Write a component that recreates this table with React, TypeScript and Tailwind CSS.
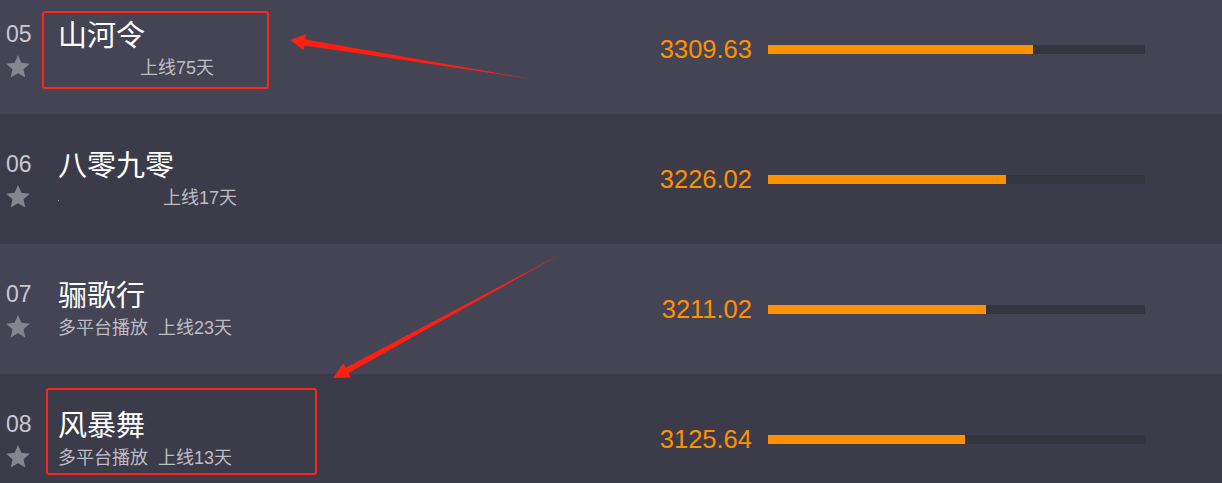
import React from 'react';

type Row = {
  rank: string;
  title: string;
  platform?: string;
  days: string;
  score: string;
  fill: number;
  gap: string;
  dot?: boolean;
};

const rows: Row[] = [
  { rank: '05', title: '山河令', days: '上线75天', score: '3309.63', fill: 265, gap: 'w-[82px]' },
  { rank: '06', title: '八零九零', days: '上线17天', score: '3226.02', fill: 238, gap: 'w-[104px]', dot: true },
  { rank: '07', title: '骊歌行', platform: '多平台播放', days: '上线23天', score: '3211.02', fill: 218, gap: '' },
  { rank: '08', title: '风暴舞', platform: '多平台播放', days: '上线13天', score: '3125.64', fill: 197, gap: '' },
];

function Star() {
  return (
    <svg width="24" height="23" viewBox="0 0 24 23" className="block">
      <path
        d="M12 0.1L15.41 7.81 23.8 8.67 17.52 14.29 19.29 22.5 12 18.3 4.71 22.5 6.48 14.29 0.2 8.67 8.59 7.81Z"
        fill="#85848f"
      />
    </svg>
  );
}

function RankRow({ row, index }: { row: Row; index: number }) {
  const bg = index % 2 === 0 ? 'bg-[#454454]' : 'bg-[#3c3b49]';
  return (
    <div className={`flex items-start h-[130px] ${bg}`}>
      {/* rank + star */}
      <div className="w-[58px] pl-[6px] pt-[38px] flex flex-col">
        <span className="text-[23px] leading-[24px] text-[#c9c8d0] font-['Liberation_Sans',sans-serif]">
          {row.rank}
        </span>
        <div className="mt-[9px]">
          <Star />
        </div>
      </div>

      {/* title */}
      <div className="w-[500px] pt-[35px] flex flex-col">
        <span className="text-[29px] leading-[34px] text-white font-['Liberation_Sans','Noto_Sans_CJK_SC',sans-serif]">
          {row.title}
        </span>
        <div className="mt-[5px] flex items-center text-[18px] leading-[20px] text-[#bdbcc4] font-['Liberation_Sans','Noto_Sans_CJK_SC',sans-serif]">
          {row.platform && <span className="mr-[10px]">{row.platform}</span>}
          {row.dot && <span className="w-[1px] h-[1px] bg-[#9a99a2] mt-[4px]" />}
          {row.gap && <span className={row.gap} />}
          <span>{row.days}</span>
        </div>
      </div>

      {/* score + bar */}
      <div className="h-full flex items-center">
        <span className="w-[194px] text-right text-[25.5px] leading-[30px] text-[#ff9000] font-['Liberation_Sans',sans-serif]">
          {row.score}
        </span>
        <div className="ml-[16px] w-[377px] h-[9px] bg-[#35343f]">
          <div className="h-full bg-[#ff9000]" style={{ width: row.fill }} />
        </div>
      </div>
    </div>
  );
}

export default function App() {
  return (
    <div className="relative w-[1222px] h-[483px] overflow-hidden bg-[#3c3b49]">
      <div className="-mt-[16px]">
        {rows.map((row, i) => (
          <RankRow key={row.rank} row={row} index={i} />
        ))}
      </div>

      {/* annotation layer */}
      <svg
        className="absolute inset-0 pointer-events-none"
        width="1222"
        height="483"
        viewBox="0 0 1222 483"
      >
        <rect x="43" y="12" width="225" height="76" rx="2" fill="none" stroke="#ff2318" strokeWidth="2" />
        <rect x="47" y="389" width="269" height="85" rx="2" fill="none" stroke="#ff2318" strokeWidth="2" />
        <polygon
          points="290,40 306,34 305.5,39.5 532,79 304.5,45.5 303.5,50"
          fill="#ff1f12"
        />
        <polygon
          points="333,378 343,363.5 345.6,367.8 563,253 348.4,373 351,377.5"
          fill="#ff1f12"
        />
      </svg>
    </div>
  );
}
